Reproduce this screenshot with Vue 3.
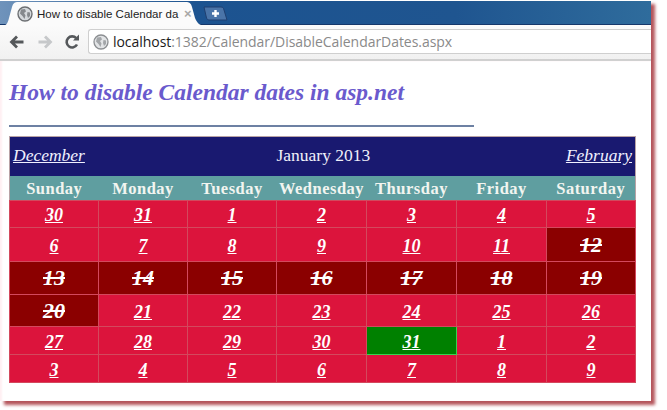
<script setup>
const dayNames = ['Sunday', 'Monday', 'Tuesday', 'Wednesday', 'Thursday', 'Friday', 'Saturday'];

// disabled dates are struck through on dark red, today is green
const weeks = [
  { height: 27, days: ['30', '31', '1', '2', '3', '4', '5'] },
  { height: 34, days: ['6', '7', '8', '9', '10', '11', '12'] },
  { height: 33, days: ['13', '14', '15', '16', '17', '18', '19'] },
  { height: 32, days: ['20', '21', '22', '23', '24', '25', '26'] },
  { height: 28, days: ['27', '28', '29', '30', '31', '1', '2'] },
  { height: 28, days: ['3', '4', '5', '6', '7', '8', '9'] },
];

function isDisabled(w, d) {
  if (w === 1 && d === 6) return true;
  if (w === 2) return true;
  return w === 3 && d === 0;
}

function cellClass(w, d) {
  return {
    disabled: isDisabled(w, d),
    today: w === 4 && d === 4,
  };
}
</script>

<template>
  <div class="window">
    <div class="tabstrip">
      <div class="tab">
        <svg class="tab-shape" width="204" height="25" viewBox="0 0 204 25">
          <path d="M0 25C4 25 6 22 7 17L10 6C11 2 13 1 16 1H184C187 1 189 2 190 6L193 17C195 22 198 25 204 25Z" fill="#fbfbfb" />
        </svg>
        <svg class="globe" width="16" height="16" viewBox="0 0 16 16">
          <circle cx="8" cy="8" r="7" fill="#d5d9dc" stroke="#6c6f72" stroke-width="1.4" />
          <path d="M4 3.500 8 3 9 5.500 7 7 8.500 9.500 7.500 13 5.500 10 3 7.500ZM10.500 6 13 6.500 13 10 11 12 10 9Z" fill="#85898d" />
        </svg>
        <span class="tab-title">How to disable Calendar da</span>
        <span class="tab-close">×</span>
      </div>
      <svg class="new-tab" width="25" height="15" viewBox="0 0 25 15">
        <path d="M1 1H18C20 1 20.500 2 21 4L24 14H6C4.500 14 4 13 3.500 12Z" fill="#4a74a8" stroke="#1f3f70" />
        <path d="M12.500 4V11M9 7.500H16" stroke="#fff" stroke-width="2.400" />
      </svg>
    </div>

    <div class="toolbar">
      <svg class="nav" width="16" height="14" viewBox="0 0 16 14">
        <path d="M14.500 7H3M8 1.500 2.500 7 8 12.500" fill="none" stroke="#55585b" stroke-width="2.800" />
      </svg>
      <svg class="nav forward" width="16" height="14" viewBox="0 0 16 14">
        <path d="M1.500 7H13M8 1.500 13.500 7 8 12.500" fill="none" stroke="#c6c8ca" stroke-width="2.800" />
      </svg>
      <svg class="nav reload" width="16" height="16" viewBox="0 0 16 16">
        <path d="M13 10.500A5.500 5.500 0 1 1 12.200 4.200" fill="none" stroke="#55585b" stroke-width="2.600" />
        <path d="M9 6.500H15V0.500Z" fill="#55585b" />
      </svg>
      <div class="address">
        <svg width="16" height="16" viewBox="0 0 16 16">
          <circle cx="8" cy="8" r="7" fill="#e2e4e6" stroke="#8c8f92" stroke-width="1.300" />
          <path d="M4 3.500 8 3 9 5.500 7 7 8.500 9.500 7.500 13 5.500 10 3 7.500ZM10.500 6 13 6.500 13 10 11 12 10 9Z" fill="#a3a6a9" />
        </svg>
        <span class="url"><span class="host">localhost</span>:1382/Calendar/DisableCalendarDates.aspx</span>
      </div>
    </div>

    <div class="page">
      <h1>How to disable Calendar dates in asp.net</h1>
      <hr />
      <table class="calendar">
        <colgroup>
          <col v-for="(w, i) in [89, 89, 89, 90, 90, 90, 89]" :key="i" :style="{ width: w + 'px' }" />
        </colgroup>
        <tbody>
          <tr class="title-row">
            <td colspan="7">
              <div class="title-inner">
                <a href="#">December</a>
                <span class="month">January 2013</span>
                <a href="#">February</a>
              </div>
            </td>
          </tr>
          <tr class="names-row">
            <th v-for="name in dayNames" :key="name">{{ name }}</th>
          </tr>
          <tr v-for="(week, w) in weeks" :key="w" :style="{ height: week.height + 'px' }">
            <td v-for="(day, d) in week.days" :key="d" class="day" :class="cellClass(w, d)">
              <a href="#">{{ day }}</a>
            </td>
          </tr>
        </tbody>
      </table>
    </div>
  </div>
</template>

<style>
html,
body {
  margin: 0;
  background: #fff;
}
</style>

<style scoped>
.window {
  width: 651px;
  height: 401px;
  margin-bottom: 9px;
  background: #fff;
  box-shadow: 4px 4px 3px #b5555c;
  display: flex;
  flex-direction: column;
  overflow: hidden;
}
.tabstrip {
  height: 25px;
  flex: none;
  display: flex;
  align-items: flex-end;
  background: linear-gradient(90deg, #6f93bb 0, #1c5390 30%, #1f5590 70%, #2f6c9c 100%);
  border-top: 1px solid #fff;
  border-bottom: 1px solid #16386b;
  box-sizing: border-box;
  padding-left: 2px;
}
.tab {
  position: relative;
  width: 202px;
  height: 23px;
  display: flex;
  align-items: center;
  padding-left: 15px;
  box-sizing: border-box;
  margin-bottom: -1px;
}
.tab-shape {
  position: absolute;
  left: 0;
  top: -1px;
}
.globe {
  position: relative;
  margin-right: 4px;
}
.tab-title {
  position: relative;
  flex: none;
  font: 11.500px "Liberation Sans", sans-serif;
  color: #222;
  white-space: nowrap;
  width: 142px;
  overflow: hidden;
}
.tab-close {
  position: relative;
  font: bold 13px "Liberation Sans", sans-serif;
  color: #a8a8a8;
  margin-left: 5px;
}
.new-tab {
  margin: 0 0 3px -1px;
}
.toolbar {
  height: 36px;
  flex: none;
  display: flex;
  align-items: center;
  background: linear-gradient(#fbfbfb, #f1f1f1);
  border-bottom: 2px solid #d0d0d0;
  box-sizing: border-box;
  padding: 0 0 1px 9px;
}
.nav {
  flex: none;
}
.forward {
  margin-left: 12px;
}
.reload {
  margin-left: 11px;
}
.address {
  flex: 1;
  height: 25px;
  margin-left: 8px;
  background: #fff;
  border: 1px solid #cfcfcf;
  border-right: none;
  border-radius: 3px 0 0 3px;
  box-sizing: border-box;
  display: flex;
  align-items: center;
  gap: 4px;
  padding-left: 4px;
}
.url {
  font: 14px "Open Sans", "Liberation Sans", sans-serif;
  letter-spacing: -0.05px;
  color: #8a8a8a;
  white-space: nowrap;
}
.host {
  color: #1a1a1a;
}
.page {
  flex: 1;
  padding: 0 15px 0 9px;
  box-shadow: inset 2px 0 2px #fff0f3;
}
h1 {
  margin: 18px 0 0;
  font: italic bold 23.500px/27px "Liberation Serif", serif;
  color: #6a5acd;
}
hr {
  width: 465px;
  height: 2px;
  margin: 19px 0 9px;
  border: none;
  background: #6d81a3;
}
.calendar {
  width: 627px;
  table-layout: fixed;
  border-collapse: collapse;
  border: 1px solid #b9a3a6;
  font-family: "Liberation Serif", serif;
}
.title-row {
  height: 39px;
  background: #191970;
  color: #f0f0f8;
}
.title-inner {
  display: flex;
  justify-content: space-between;
  align-items: center;
  padding: 0 3px 2px;
  font-size: 17.500px;
}
.title-inner a {
  color: #f0f0ff;
  font-size: 17.500px;
  font-style: italic;
}
.month {
  padding-right: 4px;
}
.title-row td {
  padding: 0;
}
.names-row {
  height: 25px;
  background: #5f9ea0;
}
.names-row th {
  padding: 2px 0 0;
  font-size: 16.500px;
  letter-spacing: 0.5px;
  font-weight: bold;
  color: #f2f5f0;
  text-align: center;
}
.day {
  padding: 3px 0 0;
  background: #dc143c;
  border: 1px solid #d3495d;
  text-align: center;
  font-size: 18px;
  font-style: italic;
  font-weight: bold;
}
.day a {
  color: #fff;
}
.disabled {
  padding-top: 0;
  background: #8b0000;
  font-size: 22px;
}
.disabled a {
  text-decoration: line-through;
}
.today {
  background: #008000;
  border-color: #35d44f;
}
</style>
